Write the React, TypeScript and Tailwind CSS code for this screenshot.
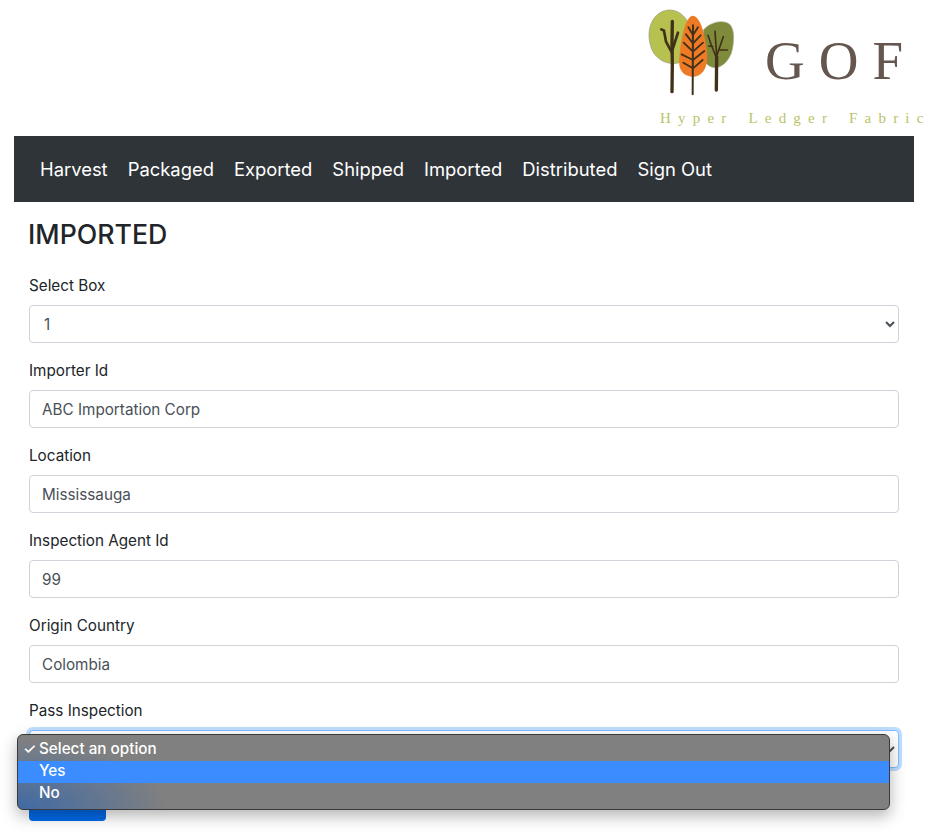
const navItems = ["Harvest", "Packaged", "Exported", "Shipped", "Imported", "Distributed", "Sign Out"];

const inputs = [
  { label: "Importer Id", value: "ABC Importation Corp" },
  { label: "Location", value: "Mississauga" },
  { label: "Inspection Agent Id", value: "99" },
  { label: "Origin Country", value: "Colombia" },
];

function Trees() {
  return (
    <svg width="110" height="105" viewBox="0 0 330 315" className="shrink-0">
      <path d="M27 100C30 55 60 28 92 30C122 32 142 55 152 85C135 130 120 170 118 188C85 198 50 180 36 150C30 135 26 118 27 100Z" fill="#b6c14f" stroke="#9a9a8c" strokeWidth="2" />
      <path d="M190 90C210 65 250 58 268 72C284 85 284 125 274 160C262 190 240 205 222 203C205 200 195 190 190 170Z" fill="#7f8b3b" stroke="#b0b0a4" strokeWidth="2" />
      <path d="M158 47C182 50 194 100 200 150C206 195 194 226 160 231C128 228 114 210 118 175C122 120 135 50 158 47Z" fill="#ee7a25" />
      <g fill="none" stroke="#42311a" strokeLinecap="round">
        <path d="M96 275L97 190L96 130L97 64" strokeWidth="10" />
        <path d="M97 160L78 125L72 92M97 150L114 98M72 92L64 88" strokeWidth="8" />
        <path d="M229 270L230 170" strokeWidth="10" />
        <path d="M230 175L214 135L204 106M230 165L225 94M231 165L250 110M236 150L262 150M218 140L206 138" strokeWidth="5" />
        <path d="M158 283L159 76" strokeWidth="6" />
        <path d="M159 105L145 82M159 105L174 82M159 130L138 103M159 130L182 106M159 155L131 128M159 155L189 128M159 180L125 163M159 180L193 153M159 205L130 188M159 205L188 180" strokeWidth="5.5" />
      </g>
    </svg>
  );
}

function Field({ label, children }: { label: string; children: React.ReactNode }) {
  return (
    <div className="mb-[15px]">
      <label className="mb-[7px] block pt-px text-[15.25px] leading-6 text-[#212529]">{label}</label>
      {children}
    </div>
  );
}

export default function App() {
  return (
    <div className="relative h-[832px] w-[935px] overflow-hidden bg-white font-['Inter',sans-serif]">
      <header className="flex h-[136px] flex-col pl-[640px]">
        <div className="flex h-[105px] items-center">
          <Trees />
          <span className="ml-[15px] mt-[15px] whitespace-nowrap font-['Liberation_Serif',serif] text-[55px] font-normal leading-none tracking-[14px] text-[#65564f]">GOF</span>
        </div>
        <span className="ml-[20px] mt-[3px] whitespace-nowrap font-['Liberation_Serif',serif] text-[15px] leading-5 tracking-[7.2px] [word-spacing:4px] text-[#b9c46a]">Hyper Ledger Fabric</span>
      </header>

      <div className="ml-[14px] w-[900px]">
        <nav className="flex h-[66px] items-center bg-[#2f3439] pl-4 pt-px">
          {navItems.map((item) => (
            <a key={item} className="px-[10px] text-[18.4px] font-normal text-white">{item}</a>
          ))}
        </nav>

        <form className="px-[15px] pt-[15px]">
          <h1 className="mb-[22px] -ml-px text-[26.7px] font-medium leading-[34px] text-[#212529]">IMPORTED</h1>

          <Field label="Select Box">
            <select defaultValue="1" className="h-[38px] w-full rounded border border-[#ced4da] bg-white px-[10px] text-[15.25px] text-[#495057]">
              <option value="1">1</option>
            </select>
          </Field>

          {inputs.map((f) => (
            <Field key={f.label} label={f.label}>
              <input defaultValue={f.value} className="block h-[38px] w-full rounded border border-[#ced4da] bg-white px-3 text-[15.25px] text-[#495057]" />
            </Field>
          ))}

          <Field label="Pass Inspection">
            <select className="h-[38px] w-full rounded border border-[#80bdff] bg-white px-2 text-[15.25px] text-[#495057] shadow-[0_0_0_3px_rgba(0,123,255,0.25)]">
              <option>Select an option</option>
              <option>Yes</option>
              <option>No</option>
            </select>
          </Field>

          <button type="button" aria-label="Submit" className="mt-px block h-[38px] w-[77px] rounded bg-[#006ae8]" />
        </form>
      </div>

      <div className="absolute left-[17px] top-[734px] w-[873px] overflow-hidden rounded-md border border-[#3a3a3a] bg-[radial-gradient(ellipse_150px_70px_at_0%_100%,#3f6aa5,#808080)] py-1 text-[15.25px] font-medium leading-[22px] text-white shadow-[0_6px_16px_rgba(0,0,0,0.3)]">
        <div className="relative -top-px flex h-[22px] items-center pl-[21px]">
          <span className="absolute left-[5px] text-[15px]">✓</span>
          Select an option
        </div>
        <div className="flex h-[22px] items-center bg-[#3b8dff] pb-[2px] pl-[21px]">Yes</div>
        <div className="flex h-[22px] items-center pb-[2px] pl-[21px]">No</div>
      </div>
    </div>
  );
}
